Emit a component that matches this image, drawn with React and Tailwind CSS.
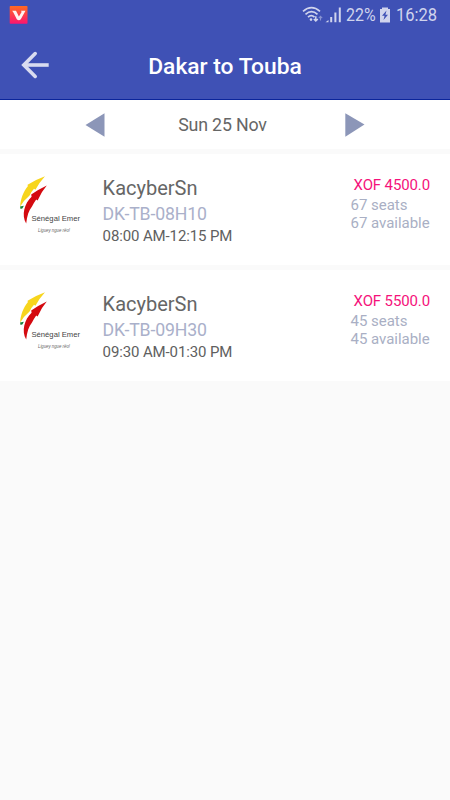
import React from 'react';

const trips = [
    { code: 'DK-TB-08H10', operator: 'KacyberSn', time: '08:00 AM-12:15 PM', price: 'XOF 4500.0', seats: 67 },
    { code: 'DK-TB-09H30', operator: 'KacyberSn', time: '09:30 AM-01:30 PM', price: 'XOF 5500.0', seats: 45 },
];

const StatusBar = () => (
    <div className="h-[30px] flex items-center pl-[9px] pr-[13px] text-[#d0d4ed]">
        <svg width="19" height="19" viewBox="0 0 19 19" className="shrink-0 mt-px">
            <defs>
                <linearGradient id="badge" x1="0" y1="0" x2="0" y2="1">
                    <stop offset="0" stopColor="#ff6a22" />
                    <stop offset="1" stopColor="#fb1470" />
                </linearGradient>
            </defs>
            <rect x="0.7" y="0" width="17.8" height="17.8" rx="0.8" fill="url(#badge)" />
            <path d="M3.2 4.8H7L9.9 10.6L12.6 6L12 4.8H16.5L11.8 13.2Q9.8 15.2 7.8 13.2L4.4 6.4Z" fill="#fff3f0" />
        </svg>
        <div className="flex-1" />
        <svg width="40" height="20" viewBox="302 5 40 20" fill="none" stroke="currentColor" className="mr-[4px] shrink-0">
            <path d="M303 11.4Q311.5 4 320 11.4" strokeWidth="1.7" />
            <path d="M305.5 14.4Q311.5 9 317.5 14.4" strokeWidth="1.7" />
            <path d="M308 17.2Q311.3 14 314.5 17.2" strokeWidth="1.7" />
            <circle cx="311" cy="19.6" r="1.3" fill="currentColor" stroke="none" />
            <path d="M315.8 16.2V20.5M313.8 19L315.8 21L317.8 19" strokeWidth="1.5" />
            <path d="M320.5 20.5V16.5M318.8 18.2L320.5 16.4L322.2 18.2" strokeWidth="1.1" opacity="0.5" />
            <path d="M325.5 22.2L328.5 20V22.2Z" fill="currentColor" stroke="none" />
            <path d="M331.2 22.2V17M335.4 22.2V12.5M339.8 22.2V7.5" strokeWidth="2" />
        </svg>
        <div className="w-[31px] h-[22px]">
            <span className="block w-max origin-left scale-x-[0.84] text-[19px] leading-[22px]">22%</span>
        </div>
        <svg width="12" height="16" viewBox="0 0 12 16" className="ml-[2px] mr-[5px] shrink-0">
            <path d="M3 0.5H9V2H11V15.5H1V2H3Z" fill="currentColor" />
            <path d="M7.5 3.5L3 8.8H5.6L4.5 13L9 7.8H6.4Z" fill="#3f51b5" />
        </svg>
        <div className="w-[41px] h-[22px]">
            <span className="block w-max origin-left scale-x-[0.87] text-[19px] leading-[22px]">16:28</span>
        </div>
    </div>
);

const Header = () => (
    <header className="h-[100px] bg-[#3f51b5] border-b border-[#0b259b]">
        <StatusBar />
        <div className="h-[69px] relative flex items-center justify-center">
            <button type="button" aria-label="Back" className="absolute left-[21px] top-[21px]">
                <svg width="28" height="28" viewBox="0 0 28 28" fill="none" stroke="#d9dcf0" strokeWidth="3.6">
                    <path d="M27.7 14H3.5" />
                    <path d="M14.2 2.6L2.8 14L14.2 25.4" strokeLinecap="round" />
                </svg>
            </button>
            <h1 className="pt-[4px] text-[22.8px] leading-7 font-medium text-white">Dakar to Touba</h1>
        </div>
    </header>
);

const DateBar = () => (
    <div className="h-[49px] bg-white flex items-center justify-between pl-[85px] pr-[85px]">
        <button type="button" aria-label="Previous day">
            <svg width="20" height="24" viewBox="0 0 20 24" className="block">
                <path d="M0.5 12L19.5 0.3V23.7Z" fill="#8c96b8" />
            </svg>
        </button>
        <span className="pt-px pr-[5px] text-[17.8px] leading-6 tracking-[-0.01em] text-[#666666]">Sun 25 Nov</span>
        <button type="button" aria-label="Next day">
            <svg width="20" height="24" viewBox="0 0 20 24" className="block">
                <path d="M19.5 11.5L0.3 0.3V23.7Z" fill="#8c96b8" />
            </svg>
        </button>
    </div>
);

const OperatorLogo = () => (
    <svg width="64" height="64" viewBox="0 0 64 64" className="shrink-0">
        <path d="M0.2 30.5C0.4 23 3.5 15.5 7.8 10.2L7.6 8.8Q16 3.4 25 0.2Q19.6 6 15.4 13.8L14 12.8Q11 16 9.6 19.5Q4 24 0.2 30.5Z" fill="#f7d51d" />
        <path d="M0 30.4L3.8 29.8L2.6 32.2L0.6 33Z" fill="#16803c" />
        <path d="M6.2 47.5C1.2 39 4.4 27.5 11.6 20.8L11.2 18.6Q18.5 13.2 26.8 9.4Q21.4 15.5 17.6 24.4L16.2 23.4Q13.6 27 12 30.6C8.8 34.5 7 40 6.2 47.5Z" fill="#d40a10" />
        <text x="11.5" y="44.5" textLength="48.5" lengthAdjust="spacingAndGlyphs" fontSize="8" fontFamily="Liberation Sans, sans-serif" fill="#444444">Sénégal Emer</text>
        <text x="18" y="55.8" textLength="32" lengthAdjust="spacingAndGlyphs" fontSize="4.6" fontStyle="italic" fontFamily="Liberation Sans, sans-serif" fill="#666666">Liguey ngue rëo!</text>
    </svg>
);

const TripCard = ({ trip }) => (
    <article className="h-[111px] bg-white flex items-start pl-5 pr-5">
        <div className="pt-[22px]">
            <OperatorLogo />
        </div>
        <div className="flex-1 pl-[18.6px] pt-[22px]">
            <h2 className="text-xl leading-6 text-[#666666]">{trip.operator}</h2>
            <p className="text-[17.7px] leading-6 pt-[2px] tracking-[-0.008em] text-[#aab0ca]">{trip.code}</p>
            <p className="text-[15px] leading-5 tracking-[-0.008em] text-[#606060]">{trip.time}</p>
        </div>
        <div className="w-[79.5px] pt-[21px] text-[15px] leading-[17.5px] tracking-[-0.002em] text-[#a9afc4] whitespace-nowrap">
            <p className="text-right leading-5 mb-[2.4px] tracking-[-0.008em] text-[#f5127b]">{trip.price}</p>
            <p>{trip.seats} seats</p>
            <p>{trip.seats} available</p>
        </div>
    </article>
);

const App = () => (
    <div className="w-full min-h-screen bg-[#fafafa] font-['Roboto',sans-serif]">
        <Header />
        <DateBar />
        <main className="flex flex-col gap-[5px] pt-[5px]">
            {trips.map((trip) => (
                <TripCard key={trip.code} trip={trip} />
            ))}
        </main>
    </div>
);

export default App;
